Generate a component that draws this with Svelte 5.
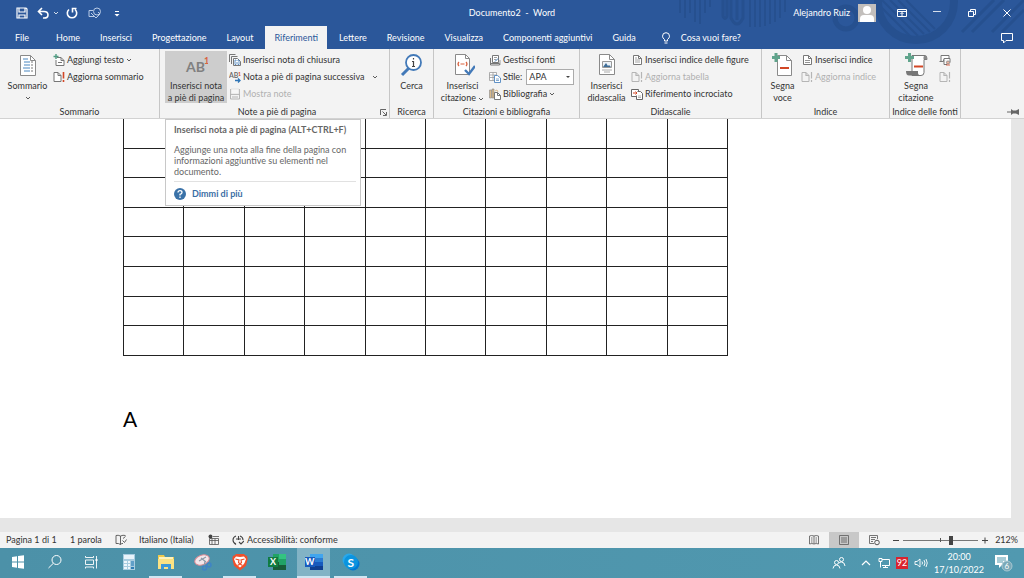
<script>
    let style = $state("APA");
    let zoom = $state(65);
    let active = $state("Riferimenti");

    const tabs = [
        "File",
        "Home",
        "Inserisci",
        "Progettazione",
        "Layout",
        "Riferimenti",
        "Lettere",
        "Revisione",
        "Visualizza",
        "Componenti aggiuntivi",
        "Guida",
    ];

    const rows = Array(8).fill(0);
    const cols = Array(10).fill(0);

    const apps = [
        { name: "start", label: "Start" },
        { name: "search", label: "Cerca" },
        { name: "tasks", label: "Visualizzazione attività" },
        { name: "calc", label: "Calcolatrice" },
        { name: "folder", label: "Esplora file", open: true },
        { name: "snip", label: "Strumento di cattura" },
        { name: "brave", label: "Brave", open: true },
        { name: "excel", label: "Excel" },
        { name: "word", label: "Word", open: true, current: true },
        { name: "skype", label: "Skype", open: true },
    ];
</script>

{#snippet chevron()}
    <svg class="chevron" viewBox="0 0 6 4" aria-hidden="true"><path d="M1 1l2 2 2-2" fill="none" stroke="currentColor" stroke-width=".8" /></svg>
{/snippet}

{#snippet page(color = "#777")}
    <path d="M2.5 1.5h5l3 3v6h-8z" fill="#fff" stroke={color} />
    <path d="M7.5 1.5v3h3" fill="none" stroke={color} />
{/snippet}

{#snippet small(name)}
    <svg class="small-icon" viewBox="0 0 12 12" aria-hidden="true">
        {#if name === "add-text"}
            <path d="M4 3.5h4l3 3v5H3V6" fill="#fff" stroke="#777" />
            <path d="M8 3.5v3h3M5 8.500h4" fill="none" stroke="#777" />
            <path d="M3 0v5M.5 2.500h5" stroke="#4f9c82" stroke-width="1.4" />
        {:else if name === "update"}
            <path d="M1 1.500h4l3 3v6H1z" fill="#fff" stroke="#777" />
            <path d="M5 1.500v3h3" fill="none" stroke="#777" />
            <path d="M10.500 1v6.500M10.500 9v2" stroke="#d24726" stroke-width="1.600" />
        {:else if name === "update-off"}
            <path d="M1 1.500h4l3 3v6H1z" fill="#f3f3f3" stroke="#b5b5b5" />
            <path d="M5 1.500v3h3M10.500 1v6.500M10.500 9v2" fill="none" stroke="#b5b5b5" stroke-width="1.200" />
        {:else if name === "endnote"}
            <path d="M.5 8V.5h6M2.500 10V2.500h6" fill="none" stroke="#777" />
            <path d="M4.500 4.500h4l3 3v4h-7z" fill="#fff" stroke="#777" />
            <path d="M7 6H6v4.500h1M9 6h1v4.500H9M8 8v2.500M8 6v1" fill="none" stroke="#3b76b5" stroke-width=".8" />
        {:else if name === "next-note"}
            <text x="0" y="7" font-size="7" font-weight="600" fill="#666">AB</text>
            <text x="9" y="4.500" font-size="5" font-weight="700" fill="#d24726">1</text>
            <path d="M6 9.500h5M9 7.500l2 2-2 2" fill="none" stroke="#2e75b6" stroke-width="1.300" />
        {:else if name === "show-notes"}
            <path d="M1.500 1v10h9V1M1.500 6.500h9M3 9h6" fill="none" stroke="#b5b5b5" />
            <path d="M2 1h8v5H2z" fill="#f7f7f7" stroke="#ccc" stroke-width=".5" />
        {:else if name === "sources"}
            <path d="M3.500 1.500h6v7h-6z" fill="#fff" stroke="#777" />
            <path d="M1.500 4v5.500h9V11h-9z" fill="none" stroke="#777" />
            <path d="M5 3.500h3M5 5.500h2M11 6v5" fill="none" stroke="#888" stroke-width=".8" />
            <path d="M6 7.500l3-3" stroke="#3b76b5" />
        {:else if name === "style"}
            <path d="M.5 1.500h7v8h-7zM.5 4h7M.5 6.500h7M4 1.500v8" fill="#fff" stroke="#999" stroke-width=".8" />
            <path d="M5.500 4.500h3l3 2.500v4.500h-6z" fill="#fff" stroke="#4f86bf" stroke-width=".9" />
            <path d="M7 8h3M7 9.500h3" stroke="#4f86bf" stroke-width=".7" />
        {:else if name === "bibliography"}
            <path d="M.5 2h2v8h-2zM3 1h2v9H3z" fill="#d9b98a" stroke="#888" stroke-width=".6" />
            <path d="M6 3l2-1 1 2" fill="none" stroke="#d9b98a" />
            <path d="M5.500 4.500h3l3 3v4h-6z" fill="#fff" stroke="#777" />
            <path d="M8.500 4.500v3h3" fill="none" stroke="#777" />
        {:else if name === "figures"}
            {@render page()}
            <path d="M4 4h2M4 6h5M4 8h5" stroke="#8a8a8a" stroke-width=".8" />
        {:else if name === "cross-ref"}
            <path d="M.5 1.500h7v7h-7z" fill="#fff" stroke="#666" />
            <path d="M6.500 3.500h3l2 2v6h-6v-4" fill="#fff" stroke="#666" />
            <path d="M2 5h4M4.500 3.500L6 5 4.500 6.500" fill="none" stroke="#d24726" />
            <path d="M7 8h3M7 9.500h3" stroke="#999" stroke-width=".7" />
        {:else if name === "index"}
            {@render page()}
            <path d="M4 6.500h5M4 8.500h5" stroke="#777" stroke-width=".8" />
        {:else if name === "authorities"}
            <path d="M2 7.500V1.500h8v3M.5 7.500h4v-2" fill="#fff" stroke="#777" />
            <path d="M5 4.500h6v4M5 4.500v6h3" fill="#fff" stroke="#777" />
            <circle cx="9" cy="8.500" r="1.600" fill="#e9b39f" stroke="#777" stroke-width=".7" />
            <path d="M8 10v2M10 10v2" stroke="#d24726" stroke-width=".8" />
        {/if}
    </svg>
{/snippet}

{#snippet big(name)}
    <svg class="big-icon" viewBox="0 0 24 24" aria-hidden="true">
        {#if name === "toc"}
            <path d="M4.500 2.500h10l5 5v15h-15z" fill="#fff" stroke="#8a8a8a" />
            <path d="M14.500 2.500v5h5" fill="none" stroke="#8a8a8a" />
            <path d="M7 6h5M8 9h6M8 12h6M7 15h7M8 18h6" stroke="#4a87c0" />
            <path d="M15 9h2M15 12h2M15 15h2M15 18h2" stroke="#777" />
        {:else if name === "footnote"}
            <text x="2" y="19" font-size="14" font-weight="700" fill="#808080">AB</text>
            <text x="20" y="11" font-size="9" font-weight="700" fill="#d9623f">1</text>
        {:else if name === "lookup"}
            <path d="M9 15L2 22" stroke="#4279b8" stroke-width="3" />
            <circle cx="13.500" cy="9.500" r="7.500" fill="#fff" stroke="#4279b8" stroke-width="1.800" />
            <path d="M13.500 8v5.500M12 8.500h1.500M12 13.500h3M13.500 5v1.500" stroke="#444" stroke-width="1.200" />
        {:else if name === "citation"}
            <path d="M4.500 1.500h10l4 4v16h-14z" fill="#fff" stroke="#8a8a8a" />
            <path d="M14.500 1.500v4h4" fill="none" stroke="#8a8a8a" />
            <path d="M8 9q-2 2 0 4M15 9q2 2 0 4M9.500 11h4" fill="none" stroke="#d9623f" stroke-width="1.200" />
            <path d="M14 17l4 4 6-8" fill="none" stroke="#4279b8" stroke-width="2.400" />
        {:else if name === "caption"}
            <path d="M4.500 1.500h10l5 5v15h-15z" fill="#fff" stroke="#8a8a8a" />
            <path d="M14.500 1.500v5h5" fill="none" stroke="#8a8a8a" />
            <path d="M7.500 8.500h9v6h-9z" fill="#eef3f8" stroke="#999" />
            <path d="M8 14l3-4 2 3 1-1 2 2z" fill="#3f6e98" />
            <path d="M7 17h10M9 19h6" stroke="#aaa" />
        {:else if name === "mark-entry"}
            <path d="M6.500 2.500h9l5 5v15h-14z" fill="#fff" stroke="#8a8a8a" />
            <path d="M15.500 2.500v5h5" fill="none" stroke="#8a8a8a" />
            <path d="M9 15h9" stroke="#d24726" stroke-width="2" />
            <path d="M5 0v9M1 4.500h8" stroke="#60a48c" stroke-width="3" />
        {:else if name === "mark-citation"}
            <path d="M8 2.500h13q2 0 2 4h-3v13q0 3-3 3H8z" fill="#fff" stroke="#777" />
            <path d="M19.500 6V4q0-1.500 2-1.500t1.500 4z" fill="#888" />
            <path d="M2 18h12v2q0 2 3 2.500H5q-3 0-3-4.500z" fill="#777" />
            <path d="M10 13.500h9" stroke="#d24726" stroke-width="2" />
            <path d="M5.500 0v9M1 4.500h9" stroke="#60a48c" stroke-width="3" />
        {/if}
    </svg>
{/snippet}

{#snippet tool(icon, label, disabled = false, menu = false)}
    <button class="tool" {disabled}>
        {@render small(icon)}
        <span>{label}</span>
        {#if menu}{@render chevron()}{/if}
    </button>
{/snippet}

{#snippet app(name)}
    <svg class="app-icon" viewBox="0 0 18 18" aria-hidden="true">
        {#if name === "start"}
            <path d="M3 4l5-.8v5.300H3zM9 3l6-.8v6.300H9zM3 9.500h5v5.300L3 14zM9 9.500h6v6.300L9 15z" fill="#fff" />
        {:else if name === "search"}
            <circle cx="10.500" cy="7" r="4.500" fill="none" stroke="#fff" />
            <path d="M7.300 10.300L2.500 15" stroke="#fff" />
        {:else if name === "tasks"}
            <path d="M2.500 3v1.500h8V3M2.500 7h8v4.500h-8zM2.500 15.500V14h8v1.500M13.500 3v12.500" fill="none" stroke="#fff" stroke-width=".9" />
            <path d="M12.500 6h2v2h-2z" fill="#fff" />
        {:else if name === "calc"}
            <path d="M3 1h12v16H3z" fill="#a8cce0" />
            <path d="M4 2h10v4H4z" fill="#e8f3fa" />
            <path d="M4 8h3v2H4zM8 8h2v2H8zM4 11h3v2H4zM8 11h2v2H8zM4 14h3v2H4zM8 14h2v2H8z" fill="#eef6fb" />
            <path d="M11 8h3v5h-3z" fill="#5f9fc9" />
            <path d="M11 14h3v2h-3z" fill="#2f7db5" />
        {:else if name === "folder"}
            <path d="M1 2h6l1 2h9v12H1z" fill="#efc94c" />
            <path d="M2 4h14v4H2z" fill="#fff3bd" />
            <path d="M1 6h16v10H1z" fill="#fbe283" />
            <path d="M4 16v-5h10v5h-3v-2H7v2z" fill="#3d9ad8" />
        {:else if name === "snip"}
            <ellipse cx="8" cy="7" rx="7.500" ry="4.800" fill="#f3e6ea" stroke="#d98a93" transform="rotate(-20 8 7)" />
            <path d="M5 8l7-4M7 5l5 4M11 8l-1 6" stroke="#8c9aa8" stroke-width="1.200" />
            <circle cx="15" cy="12" r="2" fill="none" stroke="#3f83c7" stroke-width="1.400" />
            <circle cx="10.500" cy="15" r="2" fill="none" stroke="#3f83c7" stroke-width="1.400" />
        {:else if name === "brave"}
            <path d="M5 1h8l1.500 1.500L16 2.700l.7 3-1.700 7L9 17.500 3 12.700 1.300 5.700l.7-3 1.500-.2z" fill="#f0502b" />
            <path d="M5 3.500l4 .6 4-.6 2 2.500-1.500 4L12 12l-3 2.500L6 12l-1.500-2L3 6z" fill="#fff" />
            <path d="M4.500 6l3.500 1-.5 2.500L9 11l1.500-1.500L10 7l3.500-1M6.500 12.500L9 11l2.500 1.500" fill="none" stroke="#f0502b" stroke-width="1.200" />
        {:else if name === "excel"}
            <path d="M5 1h13v16H5z" fill="#21a366" />
            <path d="M11 1h7v5h-7z" fill="#33c481" />
            <path d="M5 9h6v8H5zM11 12h7v5h-7z" fill="#185c37" />
            <path d="M0 4h10v10H0z" fill="#107c41" />
            <text x="2" y="12" font-size="9" font-weight="700" fill="#fff">X</text>
        {:else if name === "word"}
            <path d="M5 1h13v5H5z" fill="#41a5ee" />
            <path d="M5 5h13v4H5z" fill="#2b7cd3" />
            <path d="M5 9h13v4H5z" fill="#185abd" />
            <path d="M5 13h13v4H5z" fill="#103f91" />
            <path d="M0 4h10v10H0z" fill="#185abd" />
            <text x="0" y="12" font-size="9" font-weight="700" fill="#fff">W</text>
        {:else if name === "skype"}
            <circle cx="7" cy="7" r="6.500" fill="#28a8ea" />
            <circle cx="11" cy="11" r="6.500" fill="#0078d4" />
            <circle cx="9" cy="9" r="7" fill="#0b94df" />
            <text x="5.500" y="13.500" font-size="12" font-weight="700" fill="#fff">S</text>
        {/if}
    </svg>
{/snippet}

<div class="window">
    <header>
        <svg class="art" viewBox="0 0 360 49" aria-hidden="true">
            <g fill="none" stroke="#26508f">
                <path d="M16 0v13M21 0v18M26 0v13M31 0v22M36 0v24M41 0v13M46 0v7" stroke-width="2" />
                <path d="M59 0v16q2 5 4 0V0M67 0v18q6 12 12 0V0M73 0v20" stroke-width="3" />
                <path d="M86 0v27M91 0v27M96 0v27M101 0v26M106 0v24M111 0v22M116 0v18M121 0v12" stroke-width="2" />
                <circle cx="182" cy="18" r="11" stroke-width="5" />
                <circle cx="252" cy="2" r="38" stroke-width="8" />
                <path d="M214 4l34 34M218 0l36 36M226 0l34 34M234 0l32 32M242 0l29 29" stroke-width="2" />
                <path d="M298 32l32-32M308 32l32-32M328 32l32-32M338 32l22-22" stroke-width="3" />
            </g>
        </svg>
        <div class="title-bar">
            <div class="quick">
                <button aria-label="Salva">
                    <svg viewBox="0 0 12 12"><path d="M1 1h9l1 1v9H1zM3 1v4h6V1M3 11V8h6v3" fill="none" stroke="#fff" stroke-width="1.200" /></svg>
                </button>
                <button aria-label="Annulla">
                    <svg viewBox="0 0 12 12"><path d="M5 1L1.500 4.500 5 8M2 4.500h5q4 0 4 3.500T6 11" fill="none" stroke="#fff" stroke-width="1.600" /></svg>
                </button>
                {@render chevron()}
                <button class="redo" aria-label="Ripeti">
                    <svg viewBox="0 0 12 12"><path d="M3 2.500a4.700 4.700 0 1 0 6 0M10.500 1.500H6.500v4" fill="none" stroke="#fff" stroke-width="1.600" /></svg>
                </button>
                <button class="shapes" aria-label="Forme">
                    <svg viewBox="0 0 14 12"><path d="M6 9.500H1v-6h4M3 6l5 5 4-4-2-2" fill="none" stroke="#b9cbe6" /><circle cx="9" cy="4.500" r="3.500" fill="none" stroke="#b9cbe6" /></svg>
                </button>
                <button aria-label="Personalizza barra">
                    <svg viewBox="0 0 12 12"><path d="M4 4.500h4" stroke="#fff" /><path d="M3.500 7h5L6 9.500z" fill="#fff" /></svg>
                </button>
            </div>
            <h1>Documento2&nbsp; -&nbsp; Word</h1>
            <div class="account">
                <span class="user">Alejandro Ruiz</span>
                <svg class="avatar" viewBox="0 0 18 18" aria-hidden="true"><path d="M0 0h18v18H0z" fill="#c3bfbc" /><circle cx="9" cy="6" r="4" fill="#fff" /><path d="M2 18v-3q0-4 4-4h6q4 0 4 4v3z" fill="#fff" /></svg>
                <button aria-label="Opzioni barra multifunzione"><svg viewBox="0 0 12 12"><path d="M1.500 2.500h9v7h-9zM1.500 4.500h9M6 9V5.500M4.500 7L6 5.500 7.500 7" fill="none" stroke="#fff" /></svg></button>
                <button aria-label="Riduci a icona"><svg viewBox="0 0 12 12"><path d="M2 4.500h8" stroke="#d5deeb" /></svg></button>
                <button aria-label="Ripristina"><svg viewBox="0 0 12 12"><path d="M2.500 4.500h5v5h-5zM4.500 4.500v-2h5v5h-2" fill="none" stroke="#fff" /></svg></button>
                <button aria-label="Chiudi"><svg viewBox="0 0 12 12"><path d="M2.500 2.500l7 7M9.500 2.500l-7 7" stroke="#fff" /></svg></button>
            </div>
        </div>
        <nav>
            {#each tabs as tab}
                <button class="tab" class:active={tab === active} onclick={() => (active = tab)}>{tab}</button>
            {/each}
            <button class="tab tell-me">
                <svg viewBox="0 0 10 12" aria-hidden="true"><path d="M3.500 9V7.500Q1.500 6 1.500 4.200a3.500 3.500 0 0 1 7 0Q8.500 6 6.500 7.500V9zM3.500 11h3" fill="none" stroke="#fff" /></svg>
                Cosa vuoi fare?
            </button>
            <button class="comments" aria-label="Commenti">
                <svg viewBox="0 0 14 12"><path d="M1.500 1.500h11v7H6L3.500 11V8.500h-2z" fill="none" stroke="#fff" /></svg>
            </button>
        </nav>
    </header>

    <div class="ribbon">
        <section class="group toc">
            <div class="tools">
                <button class="large">{@render big("toc")}<span>Sommario</span>{@render chevron()}</button>
                <div class="stack">
                    {@render tool("add-text", "Aggiungi testo", false, true)}
                    {@render tool("update", "Aggiorna sommario")}
                </div>
            </div>
            <h2>Sommario</h2>
        </section>
        <section class="group notes">
            <div class="tools">
                <button class="large pressed" aria-describedby="note-tip">{@render big("footnote")}<span>Inserisci nota<br />a piè di pagina</span></button>
                <div class="stack">
                    {@render tool("endnote", "Inserisci nota di chiusura")}
                    <div class="split">{@render tool("next-note", "Nota a piè di pagina successiva")}{@render chevron()}</div>
                    {@render tool("show-notes", "Mostra note", true)}
                </div>
            </div>
            <h2>Note a piè di pagina</h2>
            <button class="launcher" aria-label="Opzioni note">
                <svg viewBox="0 0 7 7"><path d="M.5 6V.5H6M2.500 2.500l3.500 3.500M6.500 3v3.500H3" fill="none" stroke="#555" stroke-width=".9" /></svg>
            </button>
            <div class="tip" id="note-tip" role="tooltip">
                <strong>Inserisci nota a piè di pagina (ALT+CTRL+F)</strong>
                <p>Aggiunge una nota alla fine della pagina con informazioni aggiuntive su elementi nel documento.</p>
                <a href="#help">
                    <svg viewBox="0 0 12 12" aria-hidden="true"><circle cx="6" cy="6" r="6" fill="#3a72a8" /><path d="M4 4.500Q4 2.700 6 2.700t2 1.700Q8 5.500 6 6.300V7.500M6 8.500V10" fill="none" stroke="#fff" stroke-width="1.300" /></svg>
                    Dimmi di più
                </a>
            </div>
        </section>
        <section class="group lookup">
            <div class="tools">
                <button class="large">{@render big("lookup")}<span>Cerca</span></button>
            </div>
            <h2>Ricerca</h2>
        </section>
        <section class="group citations">
            <div class="tools">
                <button class="large">{@render big("citation")}<span>Inserisci<br />citazione {@render chevron()}</span></button>
                <div class="stack">
                    {@render tool("sources", "Gestisci fonti")}
                    <div class="tool">
                        {@render small("style")}
                        <label for="style">Stile:</label>
                        <div class="combo">
                            <select id="style" bind:value={style}>
                                <option>APA</option>
                                <option>MLA</option>
                                <option>Chicago</option>
                            </select>
                            <svg viewBox="0 0 6 4" aria-hidden="true"><path d="M1 1h4L3 3z" fill="#444" /></svg>
                        </div>
                    </div>
                    {@render tool("bibliography", "Bibliografia", false, true)}
                </div>
            </div>
            <h2>Citazioni e bibliografia</h2>
        </section>
        <section class="group captions">
            <div class="tools">
                <button class="large">{@render big("caption")}<span>Inserisci<br />didascalia</span></button>
                <div class="stack">
                    {@render tool("figures", "Inserisci indice delle figure")}
                    {@render tool("update-off", "Aggiorna tabella", true)}
                    {@render tool("cross-ref", "Riferimento incrociato")}
                </div>
            </div>
            <h2>Didascalie</h2>
        </section>
        <section class="group index">
            <div class="tools">
                <button class="large">{@render big("mark-entry")}<span>Segna<br />voce</span></button>
                <div class="stack">
                    {@render tool("index", "Inserisci indice")}
                    {@render tool("update-off", "Aggiorna indice", true)}
                </div>
            </div>
            <h2>Indice</h2>
        </section>
        <section class="group authorities">
            <div class="tools">
                <button class="large">{@render big("mark-citation")}<span>Segna<br />citazione</span></button>
                <div class="stack">
                    <button class="tool" aria-label="Inserisci indice delle fonti">{@render small("authorities")}</button>
                    <button class="tool" aria-label="Aggiorna indice delle fonti" disabled>{@render small("update-off")}</button>
                </div>
            </div>
            <h2>Indice delle fonti</h2>
        </section>
        <button class="pin" aria-label="Blocca barra multifunzione">
            <svg viewBox="0 0 12 8"><path d="M0 4h5" stroke="#666" /><path d="M4 1l2 1.500h3L12 1v6L9 5.500H6L4 7z" fill="#666" /></svg>
        </button>
    </div>

    <main>
        <article>
            <table>
                <tbody>
                    {#each rows as _}
                        <tr>{#each cols as _}<td></td>{/each}</tr>
                    {/each}
                </tbody>
            </table>
            <p>A</p>
        </article>
    </main>

    <footer class="status">
        <span class="pages">Pagina 1 di 1</span>
        <span class="words">1 parola</span>
        <svg class="proof" viewBox="0 0 12 12" aria-hidden="true"><path d="M5.500 10.500V2Q3 .8 1 1.500v8q2.500-.5 4.500 1Q7 9 8 9.500M5.500 2Q8 .8 10.500 1.500M8 4.500l2.500-2M7.500 6.500l2 2 2-3" fill="none" stroke="#555" stroke-width=".9" /></svg>
        <span class="language">Italiano (Italia)</span>
        <svg class="macro" viewBox="0 0 12 12" aria-hidden="true"><path d="M1.500 4.500h9v6h-9zM1.500 6.500h9M4 4.500v6M7 4.500v6M5 2.500h6" fill="none" stroke="#555" stroke-width=".8" /><circle cx="2.500" cy="2.500" r="2" fill="#444" /></svg>
        <svg class="access" viewBox="0 0 12 12" aria-hidden="true"><path d="M4 2Q1 3 1 6t3 4M4 10.500L2 9M8 2q3 1 3 4M4 5h5M6.500 2v4M7 8l2 2 3-3" fill="none" stroke="#444" stroke-width="1.100" /></svg>
        <span>Accessibilità: conforme</span>
        <div class="views">
            <button aria-label="Modalità lettura"><svg viewBox="0 0 12 12"><path d="M6 10V2Q3.500 1 1.500 2v8Q4 9 6 10q2-1 4.500 0V2Q8 1 6 2M3 4h1.500M3 6h1.500M3 8h1.500M7.500 4H9M7.500 6H9M7.500 8H9" fill="none" stroke="#666" stroke-width=".9" /></svg></button>
            <button class="on" aria-label="Layout di stampa"><svg viewBox="0 0 12 12"><path d="M1.500 1.500h9v9h-9zM3 4h6M3 6h6M3 8h6" fill="none" stroke="#666" stroke-width=".9" /></svg></button>
            <button aria-label="Layout Web"><svg viewBox="0 0 12 12"><path d="M6 9.500H1.500v-8h8V5M3 3.500h5M3 5.500h4M3 7.500h2" fill="none" stroke="#666" stroke-width=".9" /><circle cx="9" cy="8.500" r="2.300" fill="none" stroke="#555" /></svg></button>
            <button class="step" aria-label="Zoom indietro"><svg viewBox="0 0 8 8"><path d="M1 4.500h6" stroke="#444" /></svg></button>
            <input type="range" min="0" max="100" bind:value={zoom} aria-label="Zoom" />
            <button class="step" aria-label="Zoom avanti"><svg viewBox="0 0 8 8"><path d="M1 4.500h6M4 1.500v6" stroke="#444" /></svg></button>
            <span class="percent">212%</span>
        </div>
    </footer>

    <div class="taskbar">
        {#each apps as item}
            <button class="app" class:open={item.open} class:current={item.current} aria-label={item.label}>
                {@render app(item.name)}
            </button>
        {/each}
        <div class="tray">
            <svg class="people" viewBox="0 0 14 14" aria-hidden="true"><circle cx="9.500" cy="3.500" r="2" fill="none" stroke="#fff" /><circle cx="4.500" cy="6.500" r="2" fill="none" stroke="#fff" /><path d="M1 12.500Q1.500 9 4.500 9T8 12.500M7 7q1-1 2.500-1 3 0 3.500 4" fill="none" stroke="#fff" /></svg>
            <svg class="up" viewBox="0 0 12 12" aria-hidden="true"><path d="M2 8l4-4 4 4" fill="none" stroke="#fff" stroke-width="1.200" /></svg>
            <svg viewBox="0 0 12 12" aria-hidden="true"><path d="M4 2.500h7.500v6H4M1 1.500h3v3H1zM2.500 4.500v6M5 10.500h5M7.500 8.500v2" fill="none" stroke="#fff" /></svg>
            <span class="temp">92</span>
            <svg class="sound" viewBox="0 0 14 12" aria-hidden="true"><path d="M1 4.500h2l3-2.500v8L3 7.500H1zM8 4.500q1 1.500 0 3M10 3q2 3 0 6M12 2q2.500 4 0 8" fill="none" stroke="#fff" stroke-width=".9" /></svg>
            <div class="clock"><span>20:00</span><span>17/10/2022</span></div>
            <button class="alerts" aria-label="6 notifiche">
                <svg viewBox="0 0 20 18"><path d="M1 1h13v10H8l-3 3v-3H1z" fill="#fff" /><path d="M3 4h9M3 6h9M3 8h6" stroke="#4f98ae" /><circle cx="13" cy="12" r="5" fill="#7ba9b8" stroke="#a8c8d2" /><text x="10.500" y="15" font-size="8" fill="#fff">6</text></svg>
            </button>
        </div>
    </div>
</div>

<style>
    :global(body) {
        margin: 0;
    }

    .window {
        display: flex;
        flex-direction: column;
        min-height: 100vh;
        font: 9px/12px Lato, "Noto Sans", sans-serif;
        color: #333;
    }

    button {
        padding: 0;
        border: 0;
        background: none;
        color: inherit;
        font: inherit;
    }

    svg {
        display: block;
        flex: none;
        width: 12px;
        height: 12px;
    }

    h1,
    h2 {
        margin: 0;
        font: inherit;
        white-space: nowrap;
    }

    .chevron {
        width: 6px;
        height: 4px;
    }

    /* header */
    header {
        position: relative;
        background: #2b579a;
        color: #fff;
    }

    .art {
        position: absolute;
        top: 0;
        right: 0;
        width: 360px;
        height: 49px;
    }

    .title-bar {
        position: relative;
        display: grid;
        grid-template-columns: 1fr auto 1fr;
        align-items: center;
        height: 26px;
    }

    .quick {
        display: flex;
        align-items: center;
        padding-left: 16px;
    }

    .quick button:nth-child(2) {
        margin: 0 4px 0 9px;
    }

    .quick .redo {
        margin: 0 10px 0 7px;
    }

    .quick .shapes {
        margin-right: 9px;
    }

    .quick .shapes svg,
    .comments svg {
        width: 14px;
    }

    .account {
        display: flex;
        align-items: center;
        justify-content: flex-end;
    }

    .account button {
        display: flex;
        justify-content: center;
        width: 35px;
    }

    .avatar {
        width: 18px;
        height: 18px;
        margin: 0 8px;
    }

    nav {
        position: relative;
        display: flex;
        height: 23px;
        padding-left: 5px;
    }

    .tab {
        margin: 0 1px;
        padding: 0 9px;
        white-space: nowrap;
    }

    .tab:first-child {
        margin-right: 8px;
    }

    .tab.active {
        margin: 0 2px;
        background: #f3f3f3;
        color: #2b579a;
    }

    .tell-me {
        display: flex;
        align-items: center;
        gap: 10px;
        margin-left: 6px;
    }

    .tell-me svg {
        width: 10px;
    }

    .comments {
        margin: 0 10px 0 auto;
    }

    /* ribbon */
    .ribbon {
        display: flex;
        height: 69px;
        background: #f3f3f3;
        border-bottom: 1px solid #d2d2d2;
    }

    .group {
        position: relative;
        display: flex;
        flex-direction: column;
        flex: none;
        box-sizing: border-box;
        padding-top: 2px;
        border-right: 1px solid #c6c6c6;
    }

    .group h2 {
        text-align: center;
    }

    .tools {
        display: flex;
        height: 55px;
        margin-bottom: 1px;
    }

    .large {
        display: flex;
        flex-direction: column;
        align-items: center;
        flex: none;
        height: 52px;
        padding-top: 2px;
        white-space: nowrap;
    }

    .large .chevron {
        margin-top: 4px;
    }

    .large span .chevron {
        display: inline-block;
        margin: 0;
    }

    .large.pressed {
        background: #cdcdcd;
    }

    .big-icon {
        width: 24px;
        height: 24px;
        margin-bottom: 3px;
    }

    .stack {
        display: flex;
        flex-direction: column;
        align-items: flex-start;
    }

    .tool {
        display: flex;
        align-items: center;
        gap: 2px;
        height: 17px;
        white-space: nowrap;
    }

    .tool:disabled {
        color: #b1b1b1;
    }

    .split {
        display: flex;
        align-items: center;
        gap: 7px;
    }

    .toc {
        width: 160px;
    }

    .toc .large {
        width: 51px;
        margin-left: 2px;
    }

    .notes {
        width: 230px;
        padding-left: 5px;
    }

    .notes .large {
        width: 62px;
        margin-right: 2px;
    }

    .lookup {
        width: 44px;
    }

    .lookup .large {
        width: 43px;
    }

    .citations {
        width: 146px;
    }

    .citations .large {
        width: 53px;
        margin-left: 2px;
    }

    .captions {
        width: 182px;
    }

    .captions .large {
        width: 49px;
        margin-left: 2px;
    }

    .index {
        width: 128px;
    }

    .index .large {
        width: 37px;
        margin-left: 2px;
    }

    .authorities {
        width: 71px;
    }

    .authorities .large {
        width: 46px;
        margin-left: 3px;
    }

    .launcher {
        position: absolute;
        right: 2px;
        bottom: 2px;
    }

    .launcher svg {
        width: 7px;
        height: 7px;
    }

    .combo {
        position: relative;
        margin-left: 2px;
    }

    .combo select {
        display: block;
        appearance: none;
        width: 48px;
        height: 16px;
        padding: 0 2px;
        border: 1px solid #ababab;
        border-radius: 0;
        background: #fff;
        color: #333;
        font: inherit;
    }

    .combo svg {
        position: absolute;
        top: 6px;
        right: 3px;
        width: 6px;
        height: 4px;
    }

    .pin {
        align-self: flex-end;
        margin: 0 5px 2px auto;
    }

    .pin svg {
        height: 8px;
    }

    .tip {
        position: absolute;
        z-index: 1;
        top: 70px;
        left: 5px;
        box-sizing: border-box;
        width: 196px;
        padding: 4px 4px 5px 8px;
        border: 1px solid #c8c8c8;
        background: #fff;
        color: #666;
        white-space: nowrap;
    }

    .tip p {
        margin: 8px 0 4px;
        line-height: 11px;
        white-space: normal;
    }

    .tip a {
        display: flex;
        align-items: center;
        gap: 6px;
        padding-top: 6px;
        border-top: 1px solid #e1e1e1;
        color: #3a6ea5;
        font-weight: 700;
        text-decoration: none;
    }

    /* document */
    main {
        flex: 1;
        display: flex;
        padding: 0 13px 14px 0;
        background: #e6e6e6;
    }

    article {
        flex: 1;
        padding: 0 123px;
        background: #fff;
    }

    article p {
        margin: 48px 0;
        color: #000;
        font-size: 21px;
        line-height: 30px;
    }

    table {
        width: 100%;
        max-width: 605px;
        height: 237px;
        border-collapse: collapse;
        table-layout: fixed;
    }

    td {
        height: 28px;
        padding: 0;
        border: 1px solid #222;
    }

    tr:first-child td {
        border-top: 0;
    }

    /* status bar */
    .status {
        display: flex;
        align-items: center;
        height: 16px;
        padding-left: 6px;
        background: #f3f3f3;
        white-space: nowrap;
    }

    .pages {
        width: 64px;
    }

    .words {
        width: 45px;
    }

    .proof {
        margin-right: 12px;
    }

    .language {
        width: 69px;
    }

    .macro {
        margin-right: 12px;
    }

    .access {
        margin-right: 3px;
    }

    .views {
        display: flex;
        align-items: center;
        margin-left: auto;
        padding-right: 6px;
    }

    .views button {
        display: flex;
        align-items: center;
        justify-content: center;
        width: 30px;
        height: 16px;
    }

    .views .on {
        background: #c8c8c8;
    }

    .views .step {
        width: 14px;
    }

    .step svg {
        width: 8px;
        height: 8px;
    }

    .percent {
        min-width: 26px;
        text-align: right;
    }

    input[type="range"] {
        appearance: none;
        width: 75px;
        height: 10px;
        margin: 0;
        background:
            linear-gradient(#555, #555) center / 1px 4px no-repeat,
            linear-gradient(#777, #777) center / 100% 1px no-repeat;
    }

    input[type="range"]::-webkit-slider-thumb {
        appearance: none;
        width: 4px;
        height: 9px;
        background: #444;
    }

    /* taskbar */
    .taskbar {
        display: flex;
        height: 30px;
        padding-left: 1px;
        background: linear-gradient(90deg, #4c91a8, #5199b0);
        color: #fff;
    }

    .app {
        display: flex;
        align-items: center;
        justify-content: center;
        box-sizing: border-box;
        width: 33px;
        margin-right: 4px;
        border-bottom: 2px solid transparent;
    }

    .app.open {
        border-color: #cfe6f2;
    }

    .app.current {
        background: #82b3c5;
    }

    .app-icon {
        width: 18px;
        height: 18px;
    }

    .tray {
        display: flex;
        align-items: center;
        gap: 6px;
        margin-left: auto;
        padding-right: 10px;
    }

    .people {
        width: 14px;
        height: 14px;
        margin-right: 8px;
    }

    .temp {
        width: 12px;
        background: #d9232e;
        text-align: center;
    }

    .sound {
        width: 14px;
    }

    .clock {
        display: flex;
        flex-direction: column;
        align-items: center;
        line-height: 13px;
    }

    .alerts {
        margin-left: 4px;
    }

    .alerts svg {
        width: 20px;
        height: 18px;
    }
</style>
